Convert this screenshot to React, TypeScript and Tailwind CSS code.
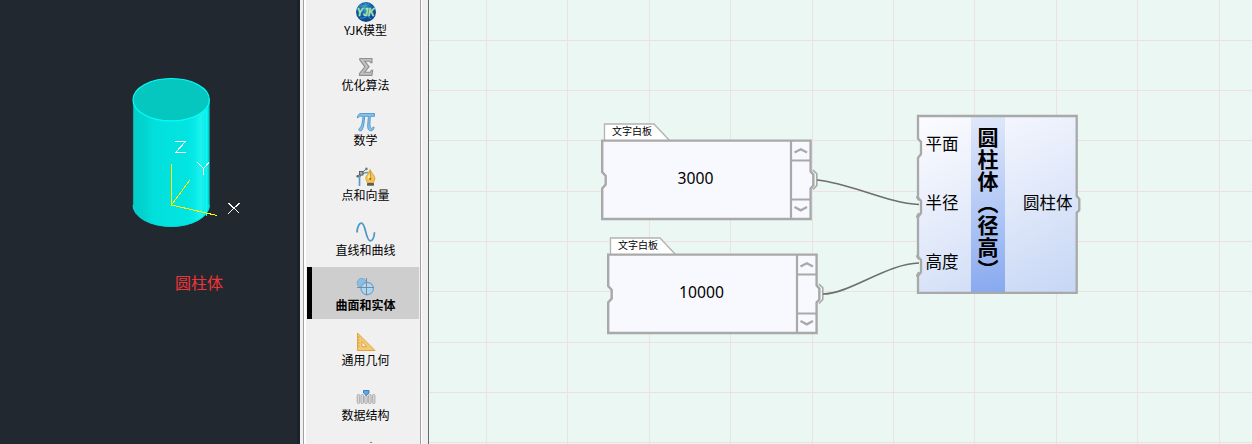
import React from "react";

const FONT = "font-['Noto_Sans_CJK_SC',sans-serif]";

function Globe() {
  return (
    <svg width="20" height="20" viewBox="0 0 20 20">
      <defs>
        <radialGradient id="globe" cx="0.45" cy="0.3" r="0.75">
          <stop offset="0" stopColor="#2f8fbd" />
          <stop offset="0.6" stopColor="#0c55a0" />
          <stop offset="1" stopColor="#0a3f86" />
        </radialGradient>
      </defs>
      <circle cx="10" cy="10" r="10" fill="url(#globe)" />
      <path d="M3 4.5C7 3 10 5 13 2M4 16c5 1 9-3 12-9M10 1c-3 5-1 12 5 16" stroke="#55b4c8" strokeWidth="0.7" fill="none" />
      <text x="9.800" y="13.600" textAnchor="middle" fontSize="10" fontWeight="700" fontStyle="italic" fontFamily="Liberation Sans" fill="#b4e6a6" stroke="#b4e6a6" strokeWidth="0.300" textLength="18" lengthAdjust="spacingAndGlyphs">YJK</text>
    </svg>
  );
}

function Sigma() {
  return (
    <svg width="20" height="20" viewBox="0 0 20 20">
      <path d="M3.800 1.500H16v4.200h-1.400l-.7-1.500H8.800l4.300 5.500-4.700 5.600h6l1-2.100h1.300l-.8 5.200H3.400v-1.600l5.500-7-5.100-6.800z" fill="#c0c0c0" stroke="#909090" strokeWidth="1.100" />
    </svg>
  );
}

function Pi() {
  return (
    <svg width="20" height="20" viewBox="0 0 20 20">
      <path d="M1.200 5.600C2 2.600 3 1.500 5.200 1.500h13.300v2.800h-4.100c-.4 4-.6 8-.3 10 .2 1.600 1 2 1.700 2 .8 0 1.200-.6 1.500-1.400l.8.300c-.2 2.200-1.400 3.600-3.200 3.600-2.200 0-3.200-1.600-3.200-4.600 0-2.800.4-6.400.8-9.900H8.600c-.2 5.400-.8 10.500-2.400 13.400-.5 1-1.200 1.200-2 1.200-1 0-1.500-.7-1.400-1.500.2-1.200 1.500-1.500 2.200-3.100C6 12.300 6.800 8.300 7 4.300H5.400C3.600 4.300 2.800 4.700 2 5.900z" fill="#86c1ec" stroke="#4e94c5" strokeWidth="0.900" />
    </svg>
  );
}

function Pen() {
  return (
    <svg width="20" height="20" viewBox="0 0 20 20">
      <path d="M3.500 19V10.500Q4.500 5.500 12.500 5.500" fill="none" stroke="#5a9cc0" strokeWidth="1.700" />
      <path d="M1 9.500L11 1.500" stroke="#777" strokeWidth="1" />
      <rect x="3.500" y="4.500" width="3.500" height="3.500" fill="#aaa" stroke="#555" strokeWidth="0.900" />
      <circle cx="1.700" cy="9.200" r="1.300" fill="#666" />
      <circle cx="10.400" cy="1.900" r="1.300" fill="#777" />
      <path d="M14.200 2.500C15 6 19 8.500 19 11.500L17.200 16h-5.600L9.700 11.500C9.700 8.500 13.200 6 14.200 2.500z" fill="#f6c34c" stroke="#d69a29" strokeWidth="0.800" />
      <path d="M11.500 11c0-2 2-3 2.500-6v6" fill="#fff0a8" />
      <path d="M14.300 4v8" stroke="#a97a2e" strokeWidth="0.700" />
      <circle cx="14.300" cy="12" r="0.900" fill="#8a6120" />
      <rect x="11" y="16" width="7" height="2.800" rx="0.700" fill="#555d61" />
    </svg>
  );
}

function Wave() {
  return (
    <svg width="20" height="20" viewBox="0 0 20 20">
      <path d="M1 10.500C1 6 3 1.200 5.400 1.200c4.500 0 4.200 17.600 8.900 17.600 2.500 0 3.900-4 4.200-8.500" fill="none" stroke="#4b9bc9" strokeWidth="1.800" />
    </svg>
  );
}

function Solids() {
  return (
    <svg width="20" height="20" viewBox="0 0 20 20">
      <circle cx="5.800" cy="6" r="4.600" fill="#8dbde2" stroke="#6ea7d3" strokeWidth="0.900" />
      <circle cx="11.200" cy="11.500" r="6.200" fill="#b1d4ef" stroke="#6aa5d3" strokeWidth="1.200" />
      <path d="M1 10.500h17M10.500 1v17.500" stroke="#7d8c98" strokeWidth="1" />
    </svg>
  );
}

function Triangle() {
  return (
    <svg width="20" height="20" viewBox="0 0 20 20">
      <path d="M1.500 1L19 18.500H1.500zM5.800 9.500v5.200h5.200z" fill="#f5c970" fillRule="evenodd" stroke="#dda445" strokeWidth="1" />
      <path d="M2 5h1.500M2 8h1.500M2 11h1.500M2 14h1.500" stroke="#c08a2c" strokeWidth="0.700" />
    </svg>
  );
}

function Data() {
  return (
    <svg width="20" height="20" viewBox="0 0 20 20">
      <g fill="#d7d7d7" stroke="#adadad" strokeWidth="1">
        <rect x="1.200" y="7.500" width="2.500" height="9" rx="1" />
        <rect x="5" y="7.500" width="2.500" height="9" rx="1" />
        <rect x="8.800" y="8.500" width="2.500" height="8" rx="1" />
        <rect x="12.600" y="7.500" width="2.500" height="9" rx="1" />
        <rect x="16.400" y="7.500" width="2.500" height="9" rx="1" />
      </g>
      <path d="M7.500 3.500h5.500V6l-2.750 2.500L7.500 6z" fill="#5ba9e6" stroke="#2e78b5" strokeWidth="0.900" />
    </svg>
  );
}

const items = [
  { label: "YJK模型", icon: <Globe /> },
  { label: "优化算法", icon: <Sigma /> },
  { label: "数学", icon: <Pi /> },
  { label: "点和向量", icon: <Pen /> },
  { label: "直线和曲线", icon: <Wave /> },
  { label: "曲面和实体", icon: <Solids />, active: true },
  { label: "通用几何", icon: <Triangle /> },
  { label: "数据结构", icon: <Data /> },
];

function Viewport() {
  return (
    <section className="relative h-full w-[300px] shrink-0 border-r-[3px] border-[#1b2229] bg-[#222830]">
      <svg className="block" width="297" height="260" viewBox="0 0 297 260">
        <defs>
          <linearGradient id="side">
            <stop offset="0" stopColor="#04cdc8" />
            <stop offset="0.13" stopColor="#02d2ce" />
            <stop offset="0.28" stopColor="#02e0dc" />
            <stop offset="0.72" stopColor="#02e4e1" />
            <stop offset="0.8" stopColor="#06e9e6" />
            <stop offset="0.88" stopColor="#1cf2ef" />
            <stop offset="0.97" stopColor="#0ceae7" />
            <stop offset="1" stopColor="#02d6d2" />
          </linearGradient>
        </defs>
        <path d="M133 100V205A38.200 21.500 0 0 0 209.500 205V100z" fill="url(#side)" />
        <path d="M133 205A38.200 21.500 0 0 0 209.500 205" fill="none" stroke="#04dfdc" />
        <path d="M133.400 100V205M209.200 100V205" stroke="#149a9a" strokeWidth="0.800" />
        <path d="M206.500 110V216" stroke="#00fffc" />
        <ellipse cx="171.200" cy="99.700" rx="38.200" ry="21.200" fill="#06c6c0" stroke="#00fffb" strokeWidth="1.200" />
        <g fill="none" stroke="#ffff00" shapeRendering="crispEdges">
          <path d="M171.500 164V205.500M171.500 205L189.500 180.500M171.500 205L217 215.500" />
        </g>
        <g fill="none" stroke="#ffffff" shapeRendering="crispEdges">
          <path d="M174.500 141.500H185.500L175.500 152.500H186" />
          <path d="M197.500 162.500L203.500 168.500L209 162.500M203.500 168.500V175" />
          <path d="M228.500 203L239.500 213.500M239.500 203L228.500 213.500" />
        </g>
      </svg>
      <div className="pl-[175px] pt-[10px] text-[16px] leading-[24px] text-[#f03537]">圆柱体</div>
    </section>
  );
}

function Sidebar() {
  return (
    <aside className="flex h-full w-[129px] shrink-0 overflow-hidden border-r border-[#696969] bg-[#f0f0f0] pl-[3px] pr-[7px]">
      <div className="h-full w-[118px] overflow-hidden border-x border-[#a0a0a0] bg-[#f0f0f0] shadow-[1px_0_0_#fff]">
        <div className="flex h-full flex-col border-l-2 border-white">
          <nav className="-mt-2 flex flex-col gap-[3px] px-[1px]">
            {items.map((item) => (
              <div
                key={item.label}
                className={
                  item.active
                    ? "flex h-[52px] shrink-0 flex-col items-center border-l-[5px] border-black bg-[#cecece] pt-[10px] font-bold"
                    : "flex h-[52px] shrink-0 flex-col items-center border-l-[5px] border-transparent pt-[10px]"
                }
              >
                {item.icon}
                <span className="-mt-[1px] whitespace-nowrap text-[12px] leading-[18px] text-black">{item.label}</span>
              </div>
            ))}
          </nav>
          <svg className="mt-[11px] shrink-0 self-center" width="20" height="16" viewBox="0 0 20 16">
            <path d="M16.500 3L18 1.500L19.500 3z" fill="#a5813a" />
          </svg>
        </div>
      </div>
    </aside>
  );
}

const columns = [57.5, 138.5, 220.5, 301.5, 383.5, 464.5, 545.5, 627.5, 708.5, 790.5];
const rows = [40.5, 90.5, 140.5, 191.5, 241.5, 291.5, 342.5, 392.5, 442.5];

function Grid() {
  return (
    <svg className="absolute inset-0" width="823" height="444">
      {columns.map((x) => (
        <path key={x} d={`M${x} 0V444`} stroke="#ebe3e3" />
      ))}
      {rows.map((y) => (
        <path key={y} d={`M0 ${y}H823`} stroke="#f0dfe1" />
      ))}
    </svg>
  );
}

function TextNode({ value, place }: { value: string; place: string }) {
  return (
    <div className={`absolute h-[100px] w-[219px] ${place}`}>
      <svg className="absolute inset-0" width="219" height="100" viewBox="0 0 219 100" fill="none">
        <path d="M3.500 18V2H53L68.500 18.500" fill="#ffffff" stroke="#b3b3b3" strokeWidth="1.300" />
        <path d="M1.200 18.600H209.600V49.500L212.300 52.500V63.500L209.600 66.500V97H1.200V66.500L4.700 62.500V54L1.200 50z" fill="#f8f9ff" stroke="#a9a9a9" strokeWidth="2.400" />
        <path d="M190 18.500V97M190 38.500H209.600M190 77.500H209.600" stroke="#a9a9a9" strokeWidth="2.200" />
        <path d="M193.500 30.500L199.800 27.300L206 30.500M193.500 85L199.800 88.300L206 85" stroke="#a9a9a9" strokeWidth="2.400" />
        <path d="M212 48L215.800 51.800V63.500L212 67.500" stroke="#a9a9a9" strokeWidth="1.600" />
      </svg>
      <div className="relative h-[18px] pl-[11px] text-[10px] leading-[18px] text-black">文字白板</div>
      <div className="relative flex h-[78px] w-[189px] items-center justify-center font-['Noto_Sans',sans-serif] text-[15.700px] text-black">{value}</div>
    </div>
  );
}

function CylinderNode() {
  return (
    <div className="absolute left-[487px] top-[114px] h-[181px] w-[166px]">
      <svg className="absolute inset-0" width="166" height="181" viewBox="0 0 166 181" fill="none">
        <defs>
          <linearGradient id="panel" gradientUnits="userSpaceOnUse" x1="0" y1="0" x2="109" y2="206">
            <stop offset="0" stopColor="#fdfdff" />
            <stop offset="0.5" stopColor="#e3eafa" />
            <stop offset="1" stopColor="#c6d6f5" />
          </linearGradient>
          <linearGradient id="band" gradientUnits="userSpaceOnUse" x1="55" y1="2" x2="80" y2="178">
            <stop offset="0" stopColor="#e0e9fa" />
            <stop offset="0.5" stopColor="#b6caf6" />
            <stop offset="1" stopColor="#87a9ef" />
          </linearGradient>
        </defs>
        <path d="M2 2H160.700V82L163.300 85V96L160.700 99V178.800H2V162L5 158V146L2 142.500V103L5 99V87L2 83.500V44L5 40V28L2 24.500z" fill="url(#panel)" />
        <path d="M55 3H89V178H55z" fill="url(#band)" />
        <path d="M2 2H160.700V82L163.300 85V96L160.700 99V178.800H2V162L5 158V146L2 142.500V103L5 99V87L2 83.500V44L5 40V28L2 24.500z" stroke="#a9a9a9" strokeWidth="2.300" />
        <path d="M0 82.500L2.800 86.500M2.800 99L0 103.500M0 141.500L2.800 145.500M2.800 158L0 162.500" stroke="#a9a9a9" strokeWidth="1.500" />
      </svg>
      <div className="relative flex h-full text-[16.500px] text-black">
        <div className="w-[55px] pl-[9.500px]">
          <div className="h-[59px] leading-[59px]">平面</div>
          <div className="h-[59px] leading-[59px]">半径</div>
          <div className="h-[59px] leading-[59px]">高度</div>
        </div>
        <div className="w-[34px] whitespace-nowrap pt-[13px] text-[21px] font-bold leading-[35px] tracking-[1px] [writing-mode:vertical-rl]">圆柱体（径高）</div>
        <div className="flex w-[67.500px] items-center justify-end pb-[6px] leading-[24px]">圆柱体</div>
      </div>
    </div>
  );
}

export default function App() {
  return (
    <main className={`flex h-[444px] w-[1252px] overflow-hidden ${FONT}`}>
      <Viewport />
      <Sidebar />
      <section className="relative h-full flex-1 overflow-hidden bg-[#eaf7f3]">
        <Grid />
        <TextNode value="3000" place="left-[172px] top-[122px]" />
        <TextNode value="10000" place="left-[178px] top-[236px]" />
        <CylinderNode />
        <svg className="absolute inset-0" width="823" height="444" fill="none">
          <path d="M388 180C421 183 458 203 490 204.500M394 294C420 294 458 263.500 490 263" stroke="#6c6f6d" strokeWidth="1.700" />
        </svg>
      </section>
    </main>
  );
}
